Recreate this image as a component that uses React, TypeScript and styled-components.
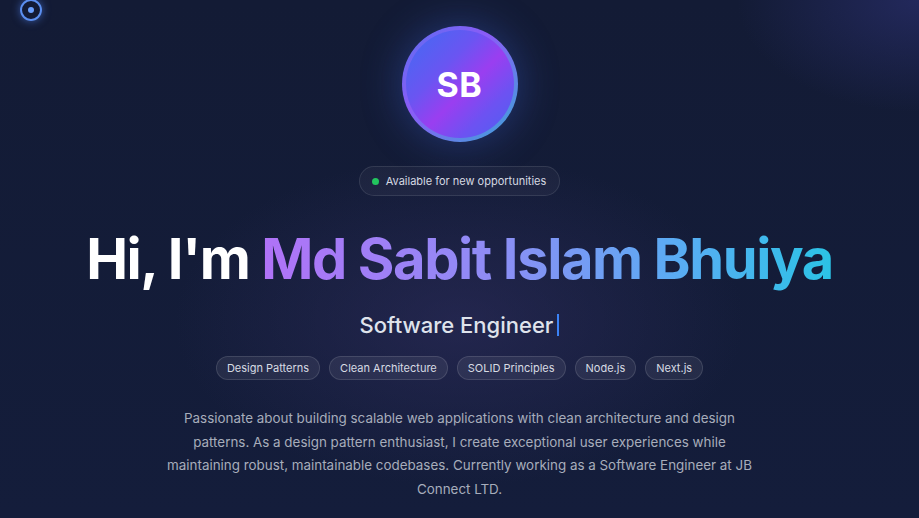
import React from "react";
import styled, { createGlobalStyle } from "styled-components";

const GlobalStyle = createGlobalStyle`
  html, body {
    margin: 0;
    padding: 0;
    background: #121a34;
  }
  body {
    font-family: Inter, "Noto Sans", sans-serif;
    -webkit-font-smoothing: antialiased;
  }
`;

const Page = styled.main`
  position: relative;
  width: 100%;
  height: 518px;
  overflow: hidden;
  background:
    radial-gradient(ellipse 260px 160px at 100% 0%, rgba(50, 54, 130, 0.5), transparent 70%),
    radial-gradient(ellipse 380px 220px at 50% 62%, rgba(48, 46, 96, 0.55), transparent 75%),
    linear-gradient(180deg, #131b35 0%, #141d3b 100%);
  display: flex;
  flex-direction: column;
  align-items: center;
  padding-top: 26px;
  box-sizing: border-box;
`;

const Cursor = styled.div`
  position: absolute;
  left: 20px;
  top: -1px;
  width: 18px;
  height: 18px;
  border: 2px solid #5b8ff0;
  border-radius: 50%;
  box-shadow: 0 0 8px rgba(80, 130, 240, 0.6);
  display: flex;
  align-items: center;
  justify-content: center;

  &::after {
    content: "";
    width: 6px;
    height: 6px;
    border-radius: 50%;
    background: #6aa0ff;
  }
`;

const AvatarRing = styled.div`
  width: 116px;
  height: 116px;
  border-radius: 50%;
  padding: 4px;
  box-sizing: border-box;
  background: linear-gradient(135deg, #5a6ef0 0%, #8b5cf6 40%, #3aa7d8 100%);
  box-shadow: 0 0 40px rgba(70, 110, 240, 0.35);
`;

const Avatar = styled.div`
  width: 100%;
  height: 100%;
  border-radius: 50%;
  background: linear-gradient(135deg, #3f6cf3 0%, #6a55f2 35%, #9a3ef0 55%, #6d52f2 75%, #4a62f2 100%);
  display: flex;
  align-items: center;
  justify-content: center;
  color: #fff;
  font-weight: 700;
  font-size: 34px;
  letter-spacing: 0.5px;
`;

const Badge = styled.div`
  margin-top: 24px;
  height: 30px;
  padding: 0 13px 0 12px;
  border-radius: 15px;
  border: 1px solid rgba(255, 255, 255, 0.1);
  background: rgba(255, 255, 255, 0.04);
  display: flex;
  align-items: center;
  gap: 7px;
  color: #d5d9e2;
  font-size: 11px;
  box-sizing: border-box;
`;

const Dot = styled.span`
  width: 7px;
  height: 7px;
  border-radius: 50%;
  background: #22c55e;
`;

const Heading = styled.h1`
  margin: 27px 0 0;
  font-size: 56px;
  line-height: 72px;
  font-weight: 700;
  color: #fff;
  letter-spacing: -1.4px;
  white-space: nowrap;
`;

const Name = styled.span`
  background: linear-gradient(90deg, #b072f7 0%, #8f8cf5 40%, #56aef3 75%, #2bc3e5 100%);
  -webkit-background-clip: text;
  background-clip: text;
  color: transparent;
`;

const Role = styled.div`
  margin-top: 17px;
  font-size: 22px;
  font-weight: 500;
  color: #dfe3ec;
  display: flex;
  align-items: center;
  gap: 4px;
`;

const Caret = styled.span`
  width: 2px;
  height: 22px;
  background: #3b82f6;
`;

const Tags = styled.div`
  margin-top: 18px;
  display: flex;
  gap: 9px;
`;

const Tag = styled.span`
  height: 24px;
  padding: 0 10px;
  border-radius: 12px;
  border: 1px solid rgba(255, 255, 255, 0.12);
  background: rgba(255, 255, 255, 0.07);
  color: #d7dbe3;
  font-size: 11px;
  display: flex;
  align-items: center;
  box-sizing: border-box;
`;

const Intro = styled.p`
  margin: 27px 0 0;
  max-width: 600px;
  text-align: center;
  color: #a7adbb;
  font-size: 13.4px;
  line-height: 23.7px;
`;

const tags = ["Design Patterns", "Clean Architecture", "SOLID Principles", "Node.js", "Next.js"];

export default function App() {
  return (
    <>
      <GlobalStyle />
      <Page>
        <Cursor />
        <AvatarRing>
          <Avatar>SB</Avatar>
        </AvatarRing>
        <Badge>
          <Dot />
          Available for new opportunities
        </Badge>
        <Heading>
          Hi, I'm <Name>Md Sabit Islam Bhuiya</Name>
        </Heading>
        <Role>
          Software Engineer
          <Caret />
        </Role>
        <Tags>
          {tags.map((t) => (
            <Tag key={t}>{t}</Tag>
          ))}
        </Tags>
        <Intro>
          Passionate about building scalable web applications with clean architecture and design
          patterns. As a design pattern enthusiast, I create exceptional user experiences while
          maintaining robust, maintainable codebases. Currently working as a Software Engineer at JB
          Connect LTD.
        </Intro>
      </Page>
    </>
  );
}
